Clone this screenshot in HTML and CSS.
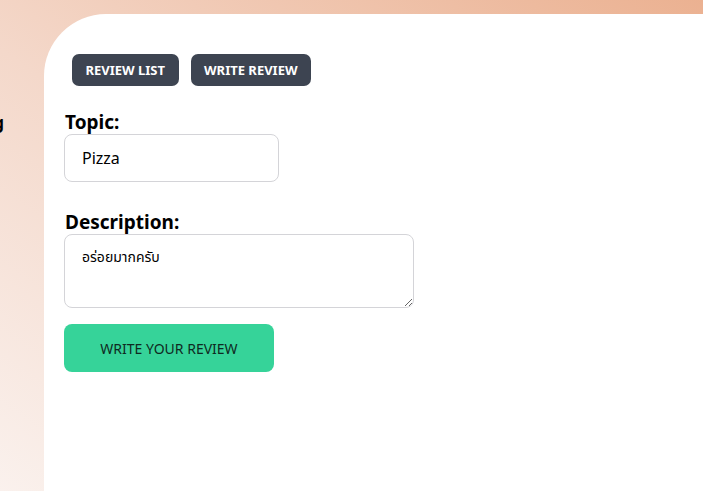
FILE: index.html
```html
<!DOCTYPE html>
<html lang="th">
<head>
<meta charset="utf-8">
<title>Write Review</title>
<link rel="stylesheet" href="styles.css">
</head>
<body>
  <aside class="sidebar">
    <span class="side-item">Writing</span>
  </aside>
  <main class="panel">
    <nav class="tabs">
      <button class="tab">REVIEW LIST</button>
      <button class="tab">WRITE REVIEW</button>
    </nav>
    <form class="form">
      <label class="label" for="topic">Topic:</label>
      <input class="input" id="topic" type="text" value="Pizza">
      <label class="label label-desc" for="desc">Description:</label>
      <textarea class="textarea" id="desc">อร่อยมากครับ</textarea>
      <button class="submit" type="button">WRITE YOUR REVIEW</button>
    </form>
  </main>
</body>
</html>
```
FILE: styles.css
```css
* { box-sizing: border-box; }
html, body { height: 100%; }
body {
  margin: 0;
  padding-top: 14px;
  display: flex;
  overflow: hidden;
  font-family: "Noto Sans", "Noto Sans Thai", sans-serif;
  background: linear-gradient(to top right, #faf1ed 0%, #f4d8ca 45%, #ebb191 100%);
}
.sidebar {
  width: 44px;
  flex: none;
  display: flex;
  justify-content: flex-end;
  padding-right: 40px;
  padding-top: 97px;
  overflow: visible;
}
.side-item {
  white-space: nowrap;
  font-weight: 700;
  font-size: 17px;
  line-height: 24px;
  color: #000;
  height: 24px;
}
.panel {
  flex: 1;
  background: #fff;
  border-top-left-radius: 62px;
  padding: 40px 0 0 20px;
}
.tabs {
  display: flex;
  gap: 12px;
  margin-left: 8px;
  margin-bottom: 24px;
}
.tab {
  height: 32px;
  padding: 0 13.5px;
  border: none;
  border-radius: 7px;
  background: #3d4451;
  color: #fff;
  font-family: inherit;
  font-weight: 700;
  font-size: 13px;
}
.form {
  display: flex;
  flex-direction: column;
  align-items: flex-start;
}
.label {
  display: block;
  font-weight: 700;
  font-size: 19px;
  line-height: 24px;
  color: #000;
  padding-left: 1px;
}
.label-desc { margin-top: 28px; }
.input {
  width: 215px;
  height: 48px;
  padding: 0 17px;
  border: 1px solid #d4d4d8;
  border-radius: 8px;
  font-family: inherit;
  font-size: 16px;
  color: #000;
  outline: none;
}
.textarea {
  width: 350px;
  height: 74px;
  padding: 12px 17px;
  border: 1px solid #d4d4d8;
  border-radius: 8px;
  font-family: inherit;
  font-size: 14px;
  color: #000;
  resize: both;
  outline: none;
}
.submit {
  margin-top: 16px;
  width: 210px;
  height: 48px;
  border: none;
  border-radius: 8px;
  background: #36d399;
  color: #0f2a22;
  font-family: inherit;
  font-size: 14px;
}
```
